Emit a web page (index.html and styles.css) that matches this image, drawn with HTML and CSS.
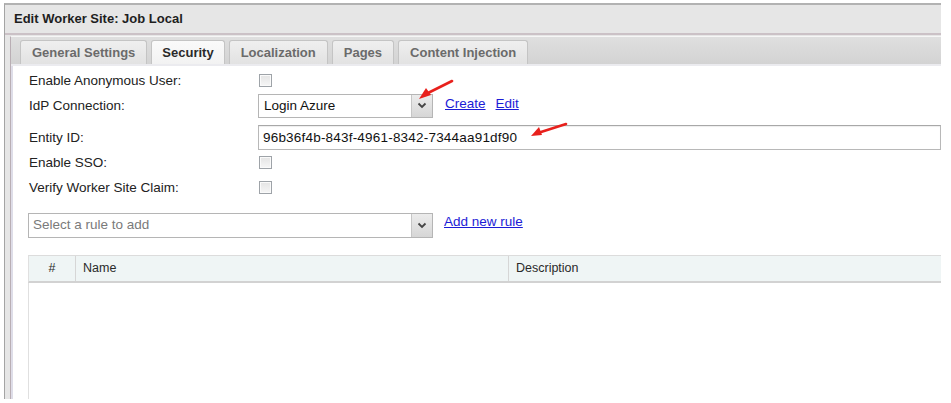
FILE: index.html
```html
<!DOCTYPE html>
<html lang="en">
<head>
    <meta charset="UTF-8">
    <title>Edit Worker Site</title>
    <link rel="stylesheet" href="styles.css">
</head>
<body>

    <div class="window">
        <div class="window-title">Edit Worker Site: Job Local</div>

        <div class="panel">
            <!-- Tab strip -->
            <div class="tabs">
                <div class="tab">General Settings</div>
                <div class="tab active">Security</div>
                <div class="tab">Localization</div>
                <div class="tab">Pages</div>
                <div class="tab">Content Injection</div>
            </div>

            <div class="tab-body">
                <div class="form">
                    <div class="row">
                        <label class="label">Enable Anonymous User:</label>
                        <input type="checkbox" class="check">
                    </div>
                    <div class="row">
                        <label class="label">IdP Connection:</label>
                        <div class="combo idp">
                            <span class="combo-text">Login Azure</span>
                            <span class="combo-btn">
                                <svg width="10" height="7" viewBox="0 0 10 7"><path d="M1.5 1.5 L5 5 L8.5 1.5" fill="none" stroke="#444" stroke-width="1.8"/></svg>
                            </span>
                        </div>
                        <a href="#" class="link first">Create</a>
                        <a href="#" class="link">Edit</a>
                    </div>
                    <div class="row tall">
                        <label class="label">Entity ID:</label>
                        <div class="textbox">96b36f4b-843f-4961-8342-7344aa91df90</div>
                    </div>
                    <div class="row">
                        <label class="label">Enable SSO:</label>
                        <input type="checkbox" class="check">
                    </div>
                    <div class="row">
                        <label class="label">Verify Worker Site Claim:</label>
                        <input type="checkbox" class="check">
                    </div>
                </div>

                <div class="rule-bar">
                    <div class="combo rule">
                        <span class="combo-text placeholder">Select a rule to add</span>
                        <span class="combo-btn">
                            <svg width="10" height="7" viewBox="0 0 10 7"><path d="M1.5 1.5 L5 5 L8.5 1.5" fill="none" stroke="#444" stroke-width="1.8"/></svg>
                        </span>
                    </div>
                    <a href="#" class="link add-rule">Add new rule</a>
                </div>

                <!-- Rules grid -->
                <div class="grid">
                    <div class="grid-head">
                        <div class="col col-num">#</div>
                        <div class="col col-name">Name</div>
                        <div class="col col-desc">Description</div>
                    </div>
                    <div class="grid-body"></div>
                </div>
            </div>
        </div>
    </div>

    <!-- red pointer arrows drawn over the form -->
    <svg class="marks" width="951" height="403" viewBox="0 0 951 403">
        <path d="M452 81 L428 93" stroke="#e8201c" stroke-width="2.6" stroke-linecap="round"/>
        <path d="M419 99 L426 88 L431 95 Z" fill="#e8201c"/>
        <path d="M566 124 L541 132" stroke="#e8201c" stroke-width="2.6" stroke-linecap="round"/>
        <path d="M531 136 L539 127 L542 135 Z" fill="#e8201c"/>
    </svg>

</body>
</html>
```

FILE: styles.css
```css
body {
    margin: 0;
    background: #fff;
    font-family: 'Liberation Sans', Arial, sans-serif;
    font-size: 13.5px;
    color: #222;
    position: relative;
    height: 403px;
    overflow: hidden;
}

.window {
    margin: 3px 0 0 4px;
    width: 936px;
    height: 394px;
    border-top: 2px solid #b2b2b2;
    border-left: 1px solid #a4a4a4;
    background: #e6e6e6;
    overflow: hidden;
    display: flex;
    flex-direction: column;
}

.window-title {
    height: 28px;
    line-height: 28px;
    padding-left: 9px;
    font-weight: bold;
    font-size: 13px;
    color: #1e1e1e;
    border-bottom: 2px solid #cbc1c6;
    flex-shrink: 0;
}

.panel {
    flex: 1;
    margin: 1px 0 0 5px;
    border-left: 1px solid #b9aeb4;
    border-top: 1px solid #f6f6f6;
    background: #fff;
    box-shadow: inset 2px 0 0 #dedde8;
    display: flex;
    flex-direction: column;
}

/* Tabs */
.tabs {
    display: flex;
    gap: 4px;
    height: 24px;
    padding: 3px 0 0 9px;
    background: linear-gradient(#dfdfdf, #d3d3d3);
    border-bottom: 2px solid #ebebef;
}

.tab {
    height: 23px;
    line-height: 23px;
    padding: 0 11px;
    border: 1px solid #c4c4c4;
    border-bottom: none;
    border-radius: 3px 3px 0 0;
    background: linear-gradient(#efefef, #e2e2e2);
    color: #6b6b6b;
    font-weight: bold;
    font-size: 13px;
}

.tab.active {
    padding: 0 10px;
    background: linear-gradient(#fafafa, #f2f2f2);
    color: #2a2a2a;
}

.tab-body {
    flex: 1;
    padding: 2px 0 0 17px;
    display: flex;
    flex-direction: column;
}

/* Form rows */
.row {
    display: flex;
    align-items: center;
    height: 25px;
}

.row.tall {
    height: 32px;
    align-items: flex-end;
}

.label {
    width: 229px;
    padding-left: 1px;
    flex-shrink: 0;
}

.row.tall .label {
    line-height: 25px;
}

.check {
    appearance: none;
    margin: 0 0 0 1px;
    width: 13px;
    height: 13px;
    border: 1px solid #9ea3a8;
    background: linear-gradient(#e4e4e4, #f6f6f6);
    box-shadow: inset 0 0 0 1px #fafafa;
}

.combo {
    display: flex;
    height: 24px;
    box-sizing: border-box;
    border: 1px solid #b5b5b5;
    background: #fff;
}

.combo.idp {
    width: 175px;
}

.combo.rule {
    width: 405px;
    height: 25px;
}

.combo-text {
    flex: 1;
    padding-left: 5px;
    line-height: 22px;
    color: #111;
}

.combo.rule .combo-text {
    padding-left: 4px;
}

.placeholder {
    color: #7a7a7a;
}

.combo-btn {
    width: 20px;
    border-left: 1px solid #c6c6c6;
    background: linear-gradient(#ececec, #d6d6d6);
    display: flex;
    align-items: center;
    justify-content: center;
}

.link {
    color: #1c1cd6;
    text-decoration: underline;
    margin-left: 10px;
    position: relative;
    top: -2px;
}

.link.first {
    margin-left: 12px;
}

.textbox {
    width: 700px;
    height: 25px;
    box-sizing: border-box;
    border: 1px solid #b8b8b8;
    border-top-color: #a8a8a8;
    padding-left: 4px;
    line-height: 23px;
    color: #111;
    letter-spacing: 0.2px;
    box-shadow: inset 0 1px 1px #eee;
}

.rule-bar {
    display: flex;
    align-items: flex-start;
    margin-top: 13px;
}

.add-rule {
    margin-left: 11px;
    top: 1px;
}

/* Rules grid */
.grid {
    flex: 1;
    margin-top: 17px;
    display: flex;
    flex-direction: column;
}

.grid-head {
    display: flex;
    height: 25px;
    border-top: 1px solid #dcdcdc;
    border-bottom: 2px solid #d2d2d2;
    border-left: 1px solid #e0e0e0;
    background: #eff5f5;
    font-size: 12.5px;
    color: #2a2a2a;
}

.col {
    line-height: 25px;
    padding-left: 7px;
}

.col-num {
    width: 46px;
    padding-left: 0;
    text-align: center;
}

.col-name {
    width: 425px;
    border-left: 1px solid #d6d6d6;
}

.col-desc {
    flex: 1;
    border-left: 1px solid #d6d6d6;
}

.grid-body {
    flex: 1;
    border-left: 1px solid #e0e0e0;
}

.marks {
    position: absolute;
    top: 0;
    left: 0;
    pointer-events: none;
}
```
